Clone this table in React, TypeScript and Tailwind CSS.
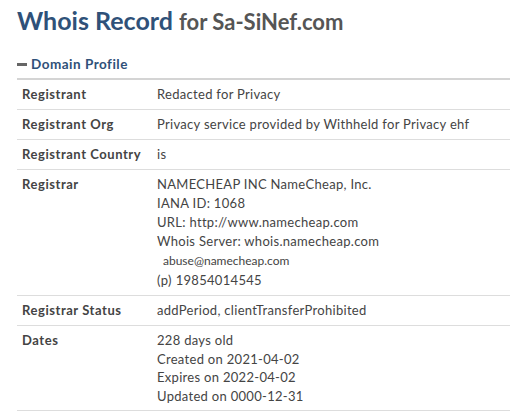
import React from 'react';

const rows: { label: string; lines: React.ReactNode[] }[] = [
  { label: 'Registrant', lines: ['Redacted for Privacy'] },
  { label: 'Registrant Org', lines: ['Privacy service provided by Withheld for Privacy ehf'] },
  { label: 'Registrant Country', lines: ['is'] },
  {
    label: 'Registrar',
    lines: [
      'NAMECHEAP INC NameCheap, Inc.',
      'IANA ID: 1068',
      'URL: http://www.namecheap.com',
      'Whois Server: whois.namecheap.com',
    ],
  },
  { label: 'Registrar Status', lines: ['addPeriod, clientTransferProhibited'] },
  {
    label: 'Dates',
    lines: ['228 days old', 'Created on 2021-04-02', 'Expires on 2022-04-02', 'Updated on 0000-12-31'],
  },
];

const App: React.FC = () => {
  return (
    <div className="min-h-screen bg-white pl-[17px] font-['Lato','Open_Sans',sans-serif]">
      {/* Title */}
      <h1 className="pt-[5px] text-[25px] leading-[30px] font-bold text-[#2f5179]">
        Whois Record{' '}
        <span className="text-[22px] text-[#555]">for Sa-SiNef.com</span>
      </h1>

      {/* Section header */}
      <div className="mt-[18px] flex items-center gap-[4px] border-b-2 border-[#d4d4d4] pb-[5px] text-[13.5px] leading-[18px] font-bold tracking-[0.5px] text-[#2f5179]">
        <span className="inline-block h-[3px] w-[10px] bg-[#666]" />
        <span>Domain Profile</span>
      </div>

      {/* Table */}
      <div className="text-[13px] leading-[19px] tracking-[0.3px]">
        {rows.map((row) => (
          <div key={row.label} className="flex border-b border-[#ddd] py-[5px]">
            <div className="w-[140px] shrink-0 pl-[5px] font-bold tracking-[0.55px] text-[#444]">{row.label}</div>
            <div className={row.lines.length > 1 && row.label === 'Dates' ? 'leading-[18.5px] text-[#444]' : 'text-[#444]'}>
              {row.lines.map((l, i) => (
                <div key={i}>{l}</div>
              ))}
              {row.label === 'Registrar' && (
                <div>
                  <div className="ml-[6px] text-[12px] leading-[20px] tracking-normal">abuse@namecheap.com</div>
                  <div className="leading-[19px]">
                    <span className="mr-[4px]">(p)</span>19854014545
                  </div>
                </div>
              )}
            </div>
          </div>
        ))}
      </div>
    </div>
  );
};

export default App;
